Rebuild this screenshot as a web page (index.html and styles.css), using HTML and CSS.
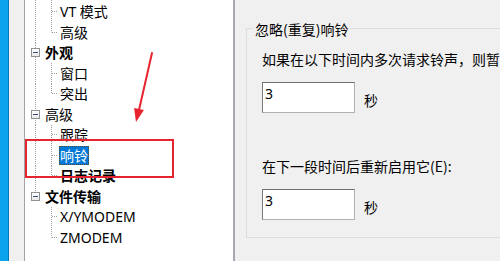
FILE: index.html
```html
<!DOCTYPE html>
<html>
<head>
<meta charset="utf-8">
<link rel="stylesheet" href="styles.css">
</head>
<body>
<div class="app">
  <div class="strip"></div>
  <div class="gutter"></div>
  <div class="tree">
    <div class="row spacer"><span class="a v"></span><span class="b v"></span></div>
    <div class="row"><span class="a v"></span><span class="b tee"></span><span class="label">VT 模式</span></div>
    <div class="row"><span class="a v"></span><span class="b ell"></span><span class="label">高级</span></div>
    <div class="row"><span class="a v"><span class="box"><span class="minus"></span></span></span><span class="label root bold">外观</span></div>
    <div class="row"><span class="a v"></span><span class="b tee"></span><span class="label">窗口</span></div>
    <div class="row"><span class="a v"></span><span class="b ell"></span><span class="label">突出</span></div>
    <div class="row"><span class="a v"><span class="box"><span class="minus"></span></span></span><span class="label root">高级</span></div>
    <div class="row"><span class="a v"></span><span class="b tee"></span><span class="label">跟踪</span></div>
    <div class="row"><span class="a v"></span><span class="b tee"></span><span class="label selected">响铃</span></div>
    <div class="row"><span class="a v"></span><span class="b ell"></span><span class="label bold">日志记录</span></div>
    <div class="row"><span class="a vtop"><span class="box"><span class="minus"></span></span></span><span class="label root bold">文件传输</span></div>
    <div class="row"><span class="a"></span><span class="b tee"></span><span class="label">X/YMODEM</span></div>
    <div class="row"><span class="a"></span><span class="b ell"></span><span class="label">ZMODEM</span></div>
  </div>
  <div class="pane">
    <div class="group">
      <div class="title">忽略(重复)响铃</div>
      <div class="text first">如果在以下时间内多次请求铃声，则暂时忽略它(I):</div>
      <div class="field">
        <div class="num">3</div>
        <span class="unit">秒</span>
      </div>
      <div class="text second">在下一段时间后重新启用它(E):</div>
      <div class="field">
        <div class="num">3</div>
        <span class="unit">秒</span>
      </div>
    </div>
  </div>
</div>
<div class="mark-rect"></div>
<svg class="mark-arrow" width="40" height="90" viewBox="0 0 40 90">
  <line x1="32" y1="3" x2="19" y2="60" stroke="#e8232f" stroke-width="2" stroke-linecap="round"/>
  <polygon points="14.1,57.9 23.9,60.1 16,72" fill="#e8232f"/>
</svg>
</body>
</html>
```
FILE: styles.css
```css
html, body {
  margin: 0;
  padding: 0;
}
body {
  width: 500px;
  height: 261px;
  overflow: hidden;
  position: relative;
  font-family: "Noto Sans", "Noto Sans CJK SC", sans-serif;
  font-size: 14px;
  color: #000;
  background: #f0f0f0;
}
.app {
  display: flex;
  height: 261px;
}
.strip {
  width: 8px;
  background: #0aa2ea;
  border-right: 1px solid #0679bd;
  flex: none;
}
.gutter {
  width: 15px;
  background: #f0f0f0;
  flex: none;
}
.tree {
  width: 208px;
  flex: none;
  background: #fff;
  border-left: 1px solid #a3a3a3;
  border-right: 2px solid #a7a7b3;
  overflow: hidden;
}
.row {
  display: flex;
  align-items: center;
  height: 20.5px;
  white-space: nowrap;
}
.row.spacer {
  height: 1.5px;
}
.a, .b {
  flex: none;
  align-self: stretch;
  display: flex;
  align-items: center;
}
.a {
  width: 20px;
}
.b {
  width: 14px;
}
.a.v {
  background: repeating-linear-gradient(to bottom, #a0a0a0 0 1px, transparent 1px 2px) 10px 0 / 1px 100% no-repeat;
}
.a.vtop {
  background: repeating-linear-gradient(to bottom, #a0a0a0 0 1px, transparent 1px 2px) 10px 0 / 1px 50% no-repeat;
}
.b.v {
  background: repeating-linear-gradient(to bottom, #a0a0a0 0 1px, transparent 1px 2px) 6px 0 / 1px 100% no-repeat;
}
.b.tee {
  background:
    repeating-linear-gradient(to bottom, #a0a0a0 0 1px, transparent 1px 2px) 6px 0 / 1px 100% no-repeat,
    repeating-linear-gradient(to right, #a0a0a0 0 1px, transparent 1px 2px) 7px 50% / 6px 1px no-repeat;
}
.b.ell {
  background:
    repeating-linear-gradient(to bottom, #a0a0a0 0 1px, transparent 1px 2px) 6px 0 / 1px 50% no-repeat,
    repeating-linear-gradient(to right, #a0a0a0 0 1px, transparent 1px 2px) 7px 50% / 6px 1px no-repeat;
}
.box {
  width: 7px;
  height: 7px;
  margin-left: 6px;
  border: 1px solid #919191;
  background: linear-gradient(#ffffff, #e9e9e9);
  display: flex;
  align-items: center;
  justify-content: center;
}
.minus {
  width: 5px;
  height: 1px;
  background: #3b4a78;
}
.label {
  padding: 0 1px;
  line-height: 19px;
  height: 19px;
}
.label.root {
  margin-left: -1px;
}
.bold {
  font-weight: bold;
}
.label.selected {
  background: #0078d7;
  color: #fff;
  outline: 1px dotted #5a4a2a;
  outline-offset: -1px;
}
.pane {
  flex: 1;
  min-width: 0;
  padding: 28px 0 0 11px;
  overflow: hidden;
}
.group {
  border: 1px solid #dcdcdc;
  border-right: none;
  height: 208px;
  padding: 0 0 0 15px;
  white-space: nowrap;
}
.title {
  display: block;
  width: max-content;
  margin: -10px 0 0 -9px;
  padding: 0 2px;
  line-height: 20px;
  background: #f0f0f0;
  font-family: "Noto Sans CJK SC", sans-serif;
}
.text {
  line-height: 20px;
  font-family: "Noto Sans CJK SC", sans-serif;
}
.text.first {
  margin-top: 10px;
}
.text.second {
  margin-top: 43px;
}
.field {
  display: flex;
  align-items: center;
  margin-top: 13px;
}
.num {
  width: 89px;
  height: 27px;
  padding: 2px 0 0 2px;
  line-height: 18px;
  background: #fff;
  border: 1px solid #7a7a7a;
  border-color: #6e6e6e #b0b0b0 #b0b0b0 #7a7a7a;
  font-family: "Noto Sans", sans-serif;
}
.unit {
  margin-left: 9px;
  margin-top: 4px;
  font-family: "Noto Sans CJK SC", sans-serif;
}
.mark-rect {
  position: absolute;
  left: 25px;
  top: 139px;
  width: 145px;
  height: 35px;
  border: 2px solid #e5242f;
}
.mark-arrow {
  position: absolute;
  left: 120px;
  top: 50px;
}
```
